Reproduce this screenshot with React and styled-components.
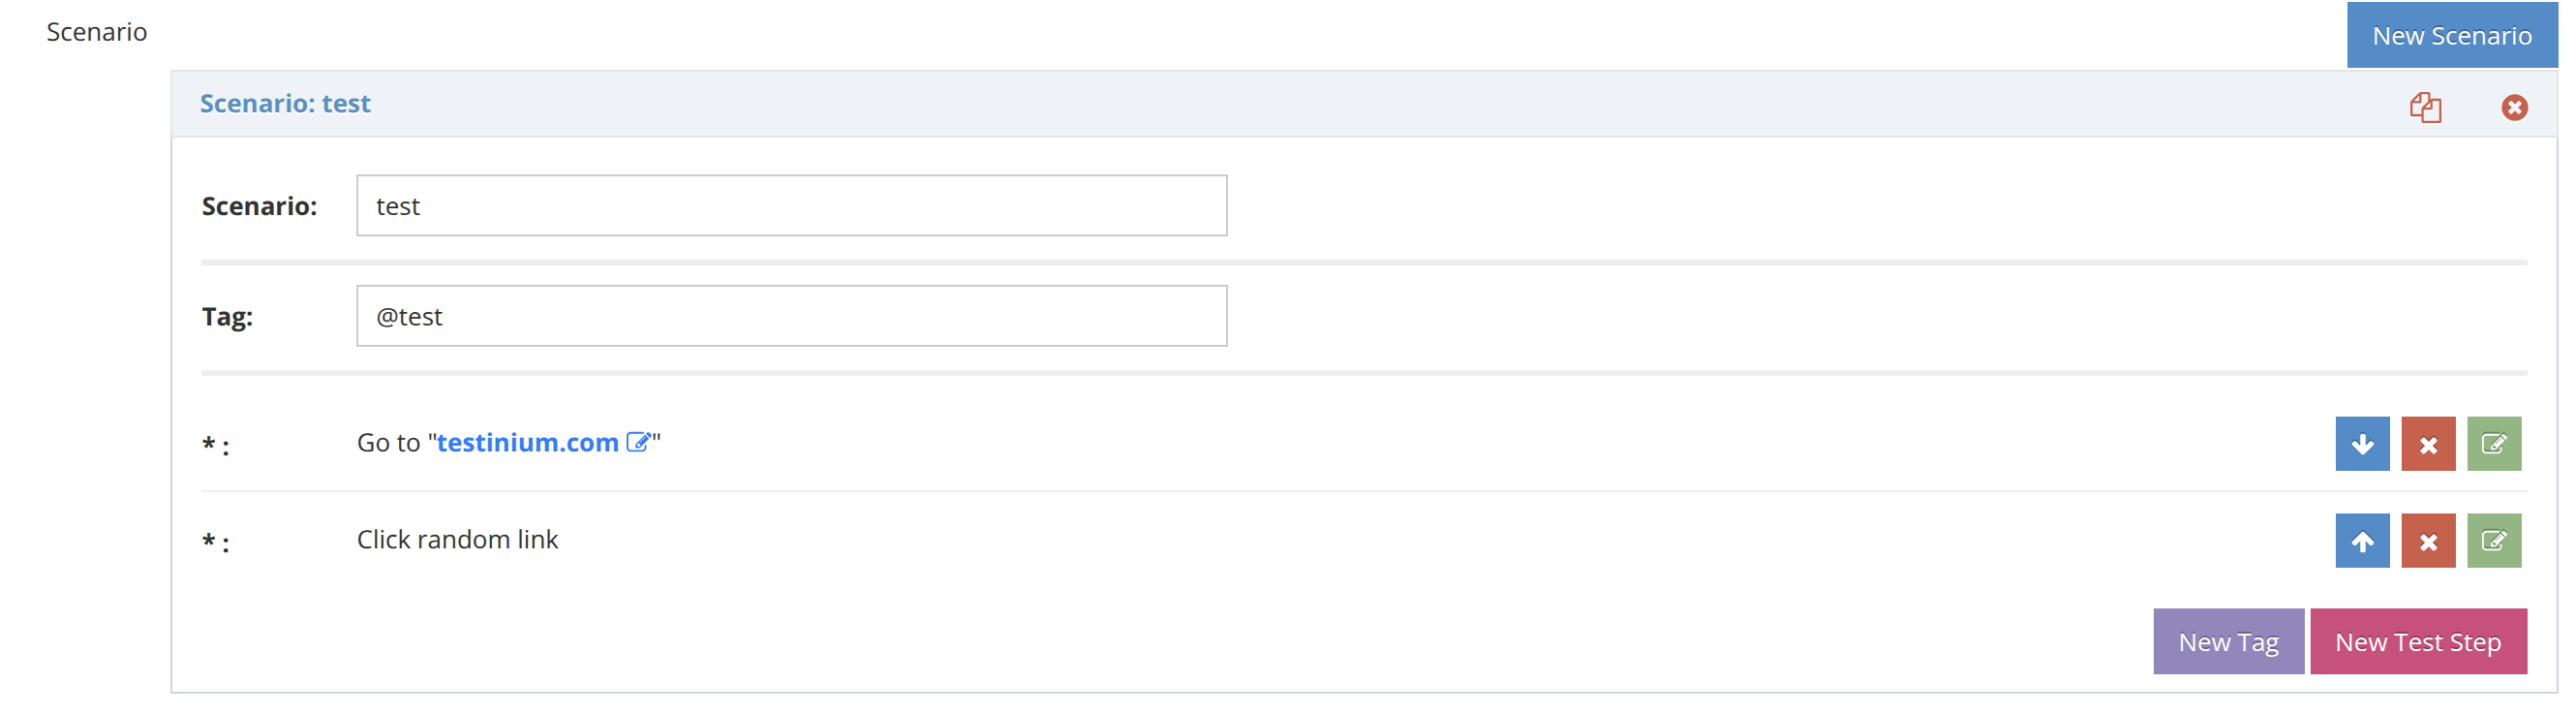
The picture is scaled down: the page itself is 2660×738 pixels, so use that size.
import React from "react";
import styled, { createGlobalStyle } from "styled-components";

const Global = createGlobalStyle`
  * { box-sizing: border-box; }
  body {
    margin: 0;
    background: #fff;
    color: #333;
    font-family: "Open Sans", "Liberation Sans", sans-serif;
    font-size: 26px;
    line-height: 36px;
    text-rendering: geometricPrecision;
  }
`;

const PATHS = {
  times:
    "M1490 1322q0 40-28 68l-136 136q-28 28-68 28t-68-28l-294-294-294 294q-28 28-68 28t-68-28l-136-136q-28-28-28-68t28-68l294-294-294-294q-28-28-28-68t28-68l136-136q28-28 68-28t68 28l294 294 294-294q28-28 68-28t68 28l136 136q28 28 28 68t-28 68l-294 294 294 294q28 28 28 68z",
  down:
    "M1675 832q0 53-37 90l-651 652q-39 37-91 37-53 0-90-37l-651-652q-38-36-38-90 0-53 38-91l74-75q39-37 91-37 53 0 90 37l294 294v-704q0-52 38-90t90-38h128q52 0 90 38t38 90v704l294-294q37-37 90-37 52 0 91 37l75 75q37 39 37 91z",
  up:
    "M1675 971q0 51-37 90l-75 75q-38 38-91 38-54 0-90-38l-294-293v704q0 52-37.5 84.500t-90.500 32.500h-128q-53 0-90.500-32.500t-37.500-84.500v-704l-294 293q-36 38-90 38t-90-38l-75-75q-38-38-38-90 0-53 38-91l651-651q35-37 90-37 54 0 91 37l651 651q37 39 37 91z",
  remove:
    "M1277 1122q0-26-19-45l-181-181 181-181q19-19 19-45 0-27-19-46l-90-90q-19-19-46-19-26 0-45 19l-181 181-181-181q-19-19-45-19-27 0-46 19l-90 90q-19 19-19 46 0 26 19 45l181 181-181 181q-19 19-19 45 0 27 19 46l90 90q19 19 46 19 26 0 45-19l181-181 181 181q19 19 45 19 27 0 46-19l90-90q19-19 19-46zm387-226q0 209-103 385.500t-279.500 279.500-385.500 103-385.500-103-279.500-279.500-103-385.500 103-385.500 279.500-279.500 385.500-103 385.500 103 279.500 279.500 103 385.500z",
  copy:
    "M1696 384q40 0 68 28t28 68v1216q0 40-28 68t-68 28h-960q-40 0-68-28t-28-68v-288h-544q-40 0-68-28t-28-68v-672q0-40 20-88t48-76l408-408q28-28 76-48t88-20h416q40 0 68 28t28 68v328q68-40 128-40h416zm-544 213l-299 299h299v-299zm-640-384l-299 299h299v-299zm196 647l316-316v-416h-384v416q0 40-28 68t-68 28h-416v640h512v-256q0-40 20-88t48-76zm956 804v-1152h-384v416q0 40-28 68t-68 28h-416v640h896z",
  edit:
    "M888 1184l116-116-152-152-116 116v56h96v96h56zm440-720q-16-16-33 1l-350 350q-17 17-1 33t33-1l350-350q17-17 1-33zm80 594v190q0 119-84.500 203.500t-203.500 84.500h-832q-119 0-203.500-84.500t-84.500-203.500v-832q0-119 84.500-203.500t203.500-84.500h832q63 0 117 25 15 7 18 23 3 17-9 29l-49 49q-14 14-32 8-23-6-45-6h-832q-66 0-113 47t-47 113v832q0 66 47 113t113 47h832q66 0 113-47t47-113v-126q0-13 9-22l64-64q15-15 35-7t20 29zm-96-738l288 288-672 672h-288v-288zm444 132l-92 92-288-288 92-92q28-28 68-28t68 28l152 152q28 28 28 68t-28 68z",
};

const Svg = styled.svg`
  display: block;
  flex: none;
  width: ${(p) => p.$size}px;
  height: ${(p) => p.$size}px;
  fill: currentColor;
  overflow: visible;
`;

const Icon = ({ name, size = 26 }) => (
  <Svg $size={size} viewBox="0 0 1792 1792" aria-hidden="true">
    <path d={PATHS[name]} />
  </Svg>
);

const Page = styled.main`
  display: grid;
  grid-template-columns: 128px 1fr;
  height: 738px;
  padding: 2px 18px 0 48px;
`;

const PageLabel = styled.div`
  padding-top: 12px;
`;

const Content = styled.div`
  display: flex;
  flex-direction: column;
`;

const Toolbar = styled.div`
  display: flex;
  justify-content: flex-end;
  margin-bottom: 2px;
`;

const Button = styled.button`
  width: ${(p) => p.$width}px;
  height: 68px;
  padding: 0 1px 0 0;
  border: 0;
  background: ${(p) => p.$color};
  color: #fff;
  font: inherit;
  text-align: center;
  white-space: nowrap;
  text-shadow: 0 -2px 0 rgba(0, 0, 0, 0.25);
`;

const Panel = styled.section`
  height: 644px;
  border: 2px solid #ced7e3;
  border-top: 0;
`;

const PanelHeader = styled.header`
  display: flex;
  justify-content: space-between;
  height: 70px;
  margin: 0 -2px;
  padding: 14px 27px 0 28.5px;
  border: 2px solid #e5e5e5;
  background: #eff3f8;
`;

const PanelTitle = styled.h2`
  margin: 0;
  color: #5b90bf;
  font-size: 26px;
  font-weight: 700;
  text-shadow: 0 2px 0 #fff;
`;

const HeaderTools = styled.div`
  display: flex;
  gap: 60px;
  padding-top: 7px;
  color: #c4624d;
  filter: drop-shadow(0 2px 0 #fff);
`;

const PanelBody = styled.div`
  padding: 38px 30px 0 30px;
`;

const Field = styled.label`
  display: grid;
  grid-template-columns: 160px 900px;
  align-items: center;
  height: 94px;
  margin-bottom: 20px;
  padding-bottom: 24px;
  border-bottom: 6px solid #eee;
`;

const FieldName = styled.span`
  padding-left: 0.5px;
  font-weight: 700;
`;

const Input = styled.input`
  width: 900px;
  height: 64px;
  padding: 0 18px 0 18.5px;
  border: 2px solid #ccc;
  border-radius: 0;
  outline: 0;
  background: #fff;
  color: #333;
  font: inherit;
`;

const Steps = styled.div`
  margin-top: 42px;
`;

const Step = styled.div`
  display: grid;
  grid-template-columns: 160px 1fr auto;
  height: 78px;
  padding-right: 6px;
  margin-bottom: 22px;
  border-bottom: 2px solid ${(p) => (p.$last ? "transparent" : "#eee")};
`;

const StepMark = styled.span`
  padding: 12px 0 0 0.5px;
  font-weight: 700;
`;

const StepText = styled.div`
  display: flex;
  padding: 8px 0 0 0.5px;
  white-space: pre;
`;

const StepLink = styled.a`
  display: flex;
  gap: 7px;
  margin-left: -1px;
  color: #357cf6;
  font-weight: 700;

  svg {
    margin-top: 6px;
  }
`;

const StepTools = styled.div`
  display: flex;
  gap: 12px;
`;

const ToolButton = styled.button`
  display: flex;
  justify-content: center;
  width: 56px;
  height: 56px;
  padding: 16px 0 0;
  border: 0;
  background: ${(p) => p.$color};
  color: #fff;

  svg {
    filter: drop-shadow(0 -2px 0 rgba(0, 0, 0, 0.25));
  }
`;

const Footer = styled.footer`
  display: flex;
  justify-content: flex-end;
  gap: 6px;
  margin-top: -2px;
`;

const StepRow = ({ arrow, last, children }) => (
  <Step $last={last}>
    <StepMark>* :</StepMark>
    <StepText>{children}</StepText>
    <StepTools>
      <ToolButton $color="#558bc6" aria-label={`Move ${arrow}`}>
        <Icon name={arrow} />
      </ToolButton>
      <ToolButton $color="#c4624d" aria-label="Delete">
        <Icon name="times" />
      </ToolButton>
      <ToolButton $color="#93b684" aria-label="Edit">
        <Icon name="edit" />
      </ToolButton>
    </StepTools>
  </Step>
);

export default function App() {
  return (
    <>
      <Global />
      <Page>
        <PageLabel>Scenario</PageLabel>
        <Content>
          <Toolbar>
            <Button $width={218} $color="#558bc6">New Scenario</Button>
          </Toolbar>
          <Panel>
            <PanelHeader>
              <PanelTitle>Scenario: test</PanelTitle>
              <HeaderTools>
                <Icon name="copy" size={32} />
                <Icon name="remove" size={32} />
              </HeaderTools>
            </PanelHeader>
            <PanelBody>
              <Field>
                <FieldName>Scenario:</FieldName>
                <Input defaultValue="test" />
              </Field>
              <Field>
                <FieldName>Tag:</FieldName>
                <Input defaultValue="@test" />
              </Field>
              <Steps>
                <StepRow arrow="down">
                  Go to "
                  <StepLink>
                    testinium.com
                    <Icon name="edit" />
                  </StepLink>
                  "
                </StepRow>
                <StepRow arrow="up" last>
                  Click random link
                </StepRow>
              </Steps>
              <Footer>
                <Button $width={156} $color="#9287bb">New Tag</Button>
                <Button $width={224} $color="#c6527c">New Test Step</Button>
              </Footer>
            </PanelBody>
          </Panel>
        </Content>
      </Page>
    </>
  );
}
